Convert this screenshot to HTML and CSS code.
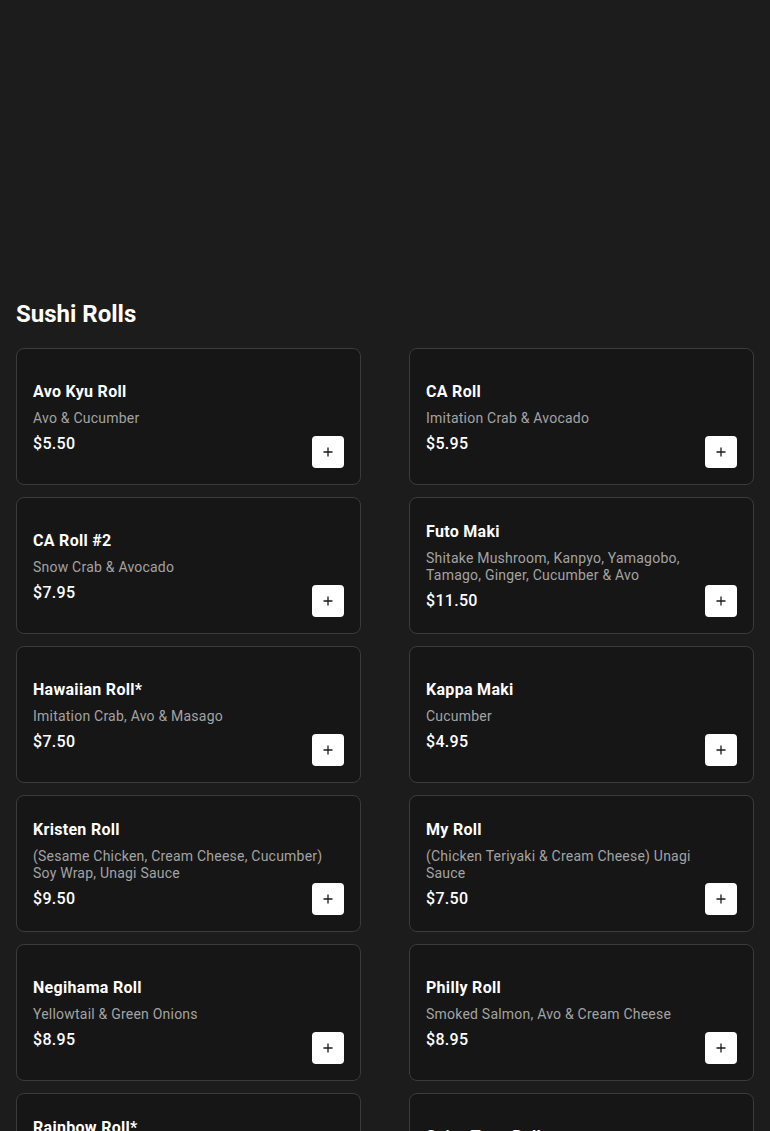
FILE: index.html
```html
<!DOCTYPE html>
<html lang="en">
<head>
<meta charset="utf-8">
<title>Sushi Rolls</title>
<link rel="stylesheet" href="styles.css">
</head>
<body>
<main class="menu">
  <section class="category">
    <h2 class="category-title">Sushi Rolls</h2>
    <div class="grid">
      <div class="card"><div class="info"><h3 class="name">Avo Kyu Roll</h3><p class="desc">Avo &amp; Cucumber</p><p class="price">$5.50</p></div><button class="add" aria-label="Add"><svg viewBox="0 0 12 12" width="12" height="12"><path d="M6 1.5v9M1.5 6h9" stroke="#1a1a1a" stroke-width="1.3" fill="none"/></svg></button></div>
      <div class="card"><div class="info"><h3 class="name">CA Roll</h3><p class="desc">Imitation Crab &amp; Avocado</p><p class="price">$5.95</p></div><button class="add" aria-label="Add"><svg viewBox="0 0 12 12" width="12" height="12"><path d="M6 1.5v9M1.5 6h9" stroke="#1a1a1a" stroke-width="1.3" fill="none"/></svg></button></div>
      <div class="card"><div class="info"><h3 class="name">CA Roll #2</h3><p class="desc">Snow Crab &amp; Avocado</p><p class="price">$7.95</p></div><button class="add" aria-label="Add"><svg viewBox="0 0 12 12" width="12" height="12"><path d="M6 1.5v9M1.5 6h9" stroke="#1a1a1a" stroke-width="1.3" fill="none"/></svg></button></div>
      <div class="card"><div class="info"><h3 class="name">Futo Maki</h3><p class="desc">Shitake Mushroom, Kanpyo, Yamagobo, Tamago, Ginger, Cucumber &amp; Avo</p><p class="price">$11.50</p></div><button class="add" aria-label="Add"><svg viewBox="0 0 12 12" width="12" height="12"><path d="M6 1.5v9M1.5 6h9" stroke="#1a1a1a" stroke-width="1.3" fill="none"/></svg></button></div>
      <div class="card"><div class="info"><h3 class="name">Hawaiian Roll*</h3><p class="desc">Imitation Crab, Avo &amp; Masago</p><p class="price">$7.50</p></div><button class="add" aria-label="Add"><svg viewBox="0 0 12 12" width="12" height="12"><path d="M6 1.5v9M1.5 6h9" stroke="#1a1a1a" stroke-width="1.3" fill="none"/></svg></button></div>
      <div class="card"><div class="info"><h3 class="name">Kappa Maki</h3><p class="desc">Cucumber</p><p class="price">$4.95</p></div><button class="add" aria-label="Add"><svg viewBox="0 0 12 12" width="12" height="12"><path d="M6 1.5v9M1.5 6h9" stroke="#1a1a1a" stroke-width="1.3" fill="none"/></svg></button></div>
      <div class="card"><div class="info"><h3 class="name">Kristen Roll</h3><p class="desc">(Sesame Chicken, Cream Cheese, Cucumber) Soy Wrap, Unagi Sauce</p><p class="price">$9.50</p></div><button class="add" aria-label="Add"><svg viewBox="0 0 12 12" width="12" height="12"><path d="M6 1.5v9M1.5 6h9" stroke="#1a1a1a" stroke-width="1.3" fill="none"/></svg></button></div>
      <div class="card"><div class="info"><h3 class="name">My Roll</h3><p class="desc">(Chicken Teriyaki &amp; Cream Cheese) Unagi Sauce</p><p class="price">$7.50</p></div><button class="add" aria-label="Add"><svg viewBox="0 0 12 12" width="12" height="12"><path d="M6 1.5v9M1.5 6h9" stroke="#1a1a1a" stroke-width="1.3" fill="none"/></svg></button></div>
      <div class="card"><div class="info"><h3 class="name">Negihama Roll</h3><p class="desc">Yellowtail &amp; Green Onions</p><p class="price">$8.95</p></div><button class="add" aria-label="Add"><svg viewBox="0 0 12 12" width="12" height="12"><path d="M6 1.5v9M1.5 6h9" stroke="#1a1a1a" stroke-width="1.3" fill="none"/></svg></button></div>
      <div class="card"><div class="info"><h3 class="name">Philly Roll</h3><p class="desc">Smoked Salmon, Avo &amp; Cream Cheese</p><p class="price">$8.95</p></div><button class="add" aria-label="Add"><svg viewBox="0 0 12 12" width="12" height="12"><path d="M6 1.5v9M1.5 6h9" stroke="#1a1a1a" stroke-width="1.3" fill="none"/></svg></button></div>
      <div class="card"><div class="info"><h3 class="name">Rainbow Roll*</h3><p class="desc">CA Roll Topped with Tuna, Salmon, Yellowtail, White Fish &amp; Avo</p><p class="price">$13.95</p></div><button class="add" aria-label="Add"><svg viewBox="0 0 12 12" width="12" height="12"><path d="M6 1.5v9M1.5 6h9" stroke="#1a1a1a" stroke-width="1.3" fill="none"/></svg></button></div>
      <div class="card"><div class="info"><h3 class="name">Spicy Tuna Roll</h3><p class="desc">Spicy Tuna &amp; Cucumber</p><p class="price">$8.50</p></div><button class="add" aria-label="Add"><svg viewBox="0 0 12 12" width="12" height="12"><path d="M6 1.5v9M1.5 6h9" stroke="#1a1a1a" stroke-width="1.3" fill="none"/></svg></button></div>
    </div>
  </section>
</main>
</body>
</html>
```
FILE: styles.css
```css
* { box-sizing: border-box; }
html, body {
  margin: 0;
  background: #1c1c1c;
  color: #ffffff;
  font-family: Roboto, "Liberation Sans", sans-serif;
}
.menu {
  padding: 298px 16px 40px;
}
.category-title {
  margin: 0 0 18px;
  font-size: 24px;
  line-height: 32px;
  font-weight: 700;
  color: #ffffff;
}
.grid {
  display: grid;
  grid-template-columns: 1fr 1fr;
  column-gap: 48px;
  row-gap: 12px;
}
.card {
  display: flex;
  align-items: flex-end;
  min-height: 137px;
  padding: 16px;
  border: 1px solid #3b3b3b;
  border-radius: 8px;
  background: #161616;
}
.info {
  flex: 1;
  min-width: 0;
  align-self: stretch;
  display: flex;
  flex-direction: column;
  justify-content: center;
  padding-top: 2px;
  margin-right: -32px;
}
.name {
  margin: 0 0 6px;
  font-size: 16px;
  line-height: 24px;
  font-weight: 700;
  letter-spacing: 0.3px;
  color: #ffffff;
}
.desc {
  margin: 0 0 5px;
  font-size: 14px;
  line-height: 17px;
  letter-spacing: 0.22px;
  color: #a3a3a3;
  max-width: 300px;
}
.price {
  margin: 0;
  font-size: 16px;
  line-height: 24px;
  font-weight: 500;
  letter-spacing: 0.3px;
  color: #ffffff;
}
.add {
  flex: none;
  width: 32px;
  height: 32px;
  padding: 0;
  border: none;
  border-radius: 4px;
  background: #ffffff;
  display: flex;
  align-items: center;
  justify-content: center;
  cursor: pointer;
}
```
